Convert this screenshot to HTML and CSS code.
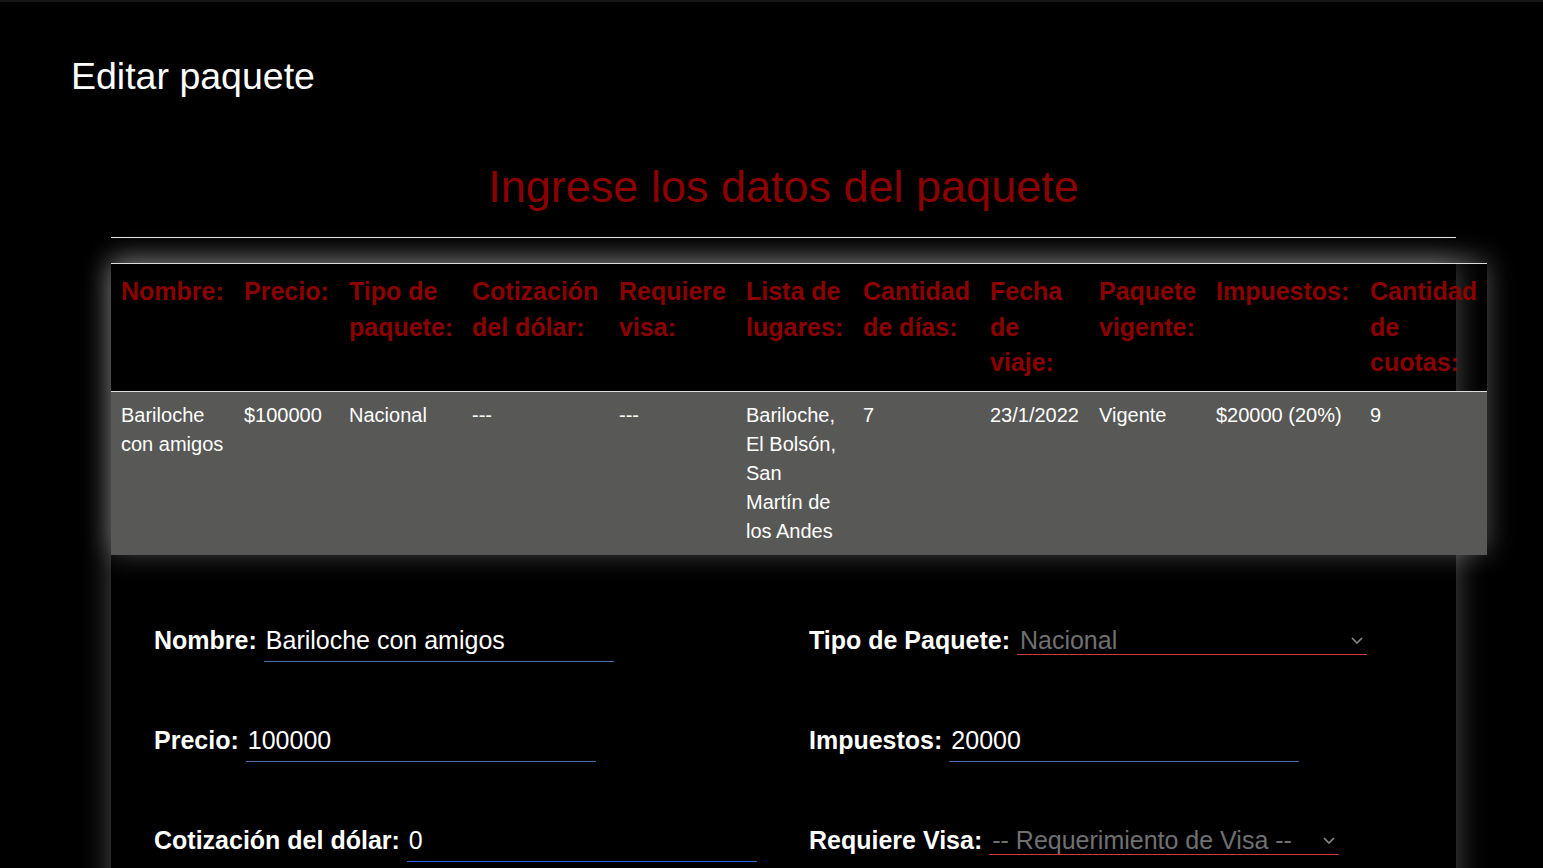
FILE: index.html
```html
<!DOCTYPE html>
<html lang="es">
<head>
<meta charset="utf-8">
<title>Editar paquete</title>
<link rel="stylesheet" href="styles.css">
</head>
<body>
<div class="topbar"></div>
<h1 class="page-title">Editar paquete</h1>
<section class="editor">
  <h2 class="editor-heading">Ingrese los datos del paquete</h2>
  <hr class="divider">
  <div class="panel">
    <table class="summary">
      <colgroup>
        <col class="col-nombre">
        <col class="col-precio">
        <col class="col-tipo">
        <col class="col-cotizacion">
        <col class="col-visa">
        <col class="col-lugares">
        <col class="col-dias">
        <col class="col-fecha">
        <col class="col-vigente">
        <col class="col-impuestos">
        <col class="col-cuotas">
      </colgroup>
      <thead>
        <tr>
          <th>Nombre:</th>
          <th>Precio:</th>
          <th>Tipo de paquete:</th>
          <th>Cotización del dólar:</th>
          <th>Requiere visa:</th>
          <th>Lista de lugares:</th>
          <th>Cantidad de días:</th>
          <th>Fecha de viaje:</th>
          <th>Paquete vigente:</th>
          <th>Impuestos:</th>
          <th>Cantidad de cuotas:</th>
        </tr>
      </thead>
      <tbody>
        <tr>
          <td>Bariloche con amigos</td>
          <td>$100000</td>
          <td>Nacional</td>
          <td>---</td>
          <td>---</td>
          <td>Bariloche, El Bolsón, San Martín de los Andes</td>
          <td>7</td>
          <td>23/1/2022</td>
          <td>Vigente</td>
          <td>$20000 (20%)</td>
          <td>9</td>
        </tr>
      </tbody>
    </table>

    <form class="form">
      <div class="field">
        <label class="field-label" for="nombre">Nombre:</label>
        <input class="text-input" id="nombre" type="text" value="Bariloche con amigos">
      </div>
      <div class="field">
        <label class="field-label" for="tipo">Tipo de Paquete:</label>
        <div class="select-wrap">
          <select class="select" id="tipo">
            <option>Nacional</option>
            <option>Internacional</option>
          </select>
          <svg class="chevron" width="12" height="7" viewBox="0 0 12 7" aria-hidden="true"><polyline points="1,1 6,6 11,1" fill="none" stroke="#8a8a8a" stroke-width="1.6"/></svg>
        </div>
      </div>
      <div class="field">
        <label class="field-label" for="precio">Precio:</label>
        <input class="text-input" id="precio" type="text" value="100000">
      </div>
      <div class="field">
        <label class="field-label" for="impuestos">Impuestos:</label>
        <input class="text-input" id="impuestos" type="text" value="20000">
      </div>
      <div class="field">
        <label class="field-label" for="cotizacion">Cotización del dólar:</label>
        <input class="text-input text-input-active" id="cotizacion" type="text" value="0">
      </div>
      <div class="field">
        <label class="field-label" for="visa">Requiere Visa:</label>
        <div class="select-wrap">
          <select class="select" id="visa">
            <option>-- Requerimiento de Visa --</option>
            <option>Sí</option>
            <option>No</option>
          </select>
          <svg class="chevron" width="12" height="7" viewBox="0 0 12 7" aria-hidden="true"><polyline points="1,1 6,6 11,1" fill="none" stroke="#8a8a8a" stroke-width="1.6"/></svg>
        </div>
      </div>
    </form>
  </div>
</section>
</body>
</html>
```

FILE: styles.css
```css
html, body {
  margin: 0;
  padding: 0;
  background: #000;
}

body {
  font-family: "Liberation Sans", Arial, sans-serif;
  color: #fff;
  overflow: hidden;
}

.topbar {
  height: 2px;
  background: #151515;
}

.page-title {
  margin: 53px 0 0 71px;
  font-size: 37.5px;
  font-weight: normal;
  line-height: normal;
  color: #fff;
}

.editor {
  margin-left: 111px;
  width: 1345px;
}

.editor-heading {
  margin: 63px 0 0;
  font-size: 45px;
  font-weight: normal;
  line-height: normal;
  text-align: center;
  color: #8b0000;
}

.divider {
  margin: 24px 0 0;
  height: 1px;
  border: 0;
  background: #e6e6e6;
}

.panel {
  margin-top: 25px;
  background: #000;
  box-shadow: 0 0 28px rgba(255, 255, 255, 0.3);
  padding-bottom: 120px;
}

.summary {
  width: 1376px;
  table-layout: fixed;
  border-collapse: collapse;
  border-top: 1px solid #dcdcdc;
  box-shadow: 0 -3px 26px rgba(255, 255, 255, 0.32);
}

.col-nombre { width: 123px; }
.col-precio { width: 105px; }
.col-tipo { width: 123px; }
.col-cotizacion { width: 147px; }
.col-visa { width: 127px; }
.col-lugares { width: 117px; }
.col-dias { width: 127px; }
.col-fecha { width: 109px; }
.col-vigente { width: 117px; }
.col-impuestos { width: 154px; }
.col-cuotas { width: 127px; }

.summary th {
  padding: 10px 8px 10px 10px;
  font-size: 25px;
  line-height: 35.5px;
  font-weight: bold;
  color: #8b0000;
  text-align: left;
  vertical-align: top;
  border-bottom: 1px solid #dcdcdc;
}

.summary td {
  padding: 9px 13px 9px 10px;
  font-size: 20px;
  line-height: 29px;
  color: #fff;
  vertical-align: top;
  background: #585856;
}

.summary td:first-child {
  padding-right: 4px;
}

.form {
  display: grid;
  grid-template-columns: 655px 1fr;
  grid-template-rows: repeat(3, 100px);
  align-items: baseline;
  padding: 69px 0 0 43px;
}

.field {
  display: flex;
  align-items: baseline;
  gap: 7px;
}

.field-label {
  font-size: 25px;
  font-weight: bold;
  color: #fff;
  white-space: nowrap;
}

.text-input {
  width: 350px;
  box-sizing: border-box;
  padding: 2px 2px 6px;
  border: 0;
  border-bottom: 1px solid #4a6db0;
  background: transparent;
  color: #fff;
  font-family: "Liberation Sans", Arial, sans-serif;
  font-size: 25px;
  outline: none;
}

.text-input-active {
  border-bottom-color: #2c64d6;
}

.select-wrap {
  position: relative;
  display: inline-block;
}

.select {
  appearance: none;
  -webkit-appearance: none;
  width: 350px;
  box-sizing: border-box;
  padding: 0 24px 0 3px;
  margin: 0;
  border: 0;
  border-bottom: 1px solid #d13a3a;
  border-radius: 0;
  background: transparent;
  color: #707070;
  font-family: "Liberation Sans", Arial, sans-serif;
  font-size: 25px;
  outline: none;
}

.chevron {
  position: absolute;
  right: 4px;
  bottom: 11px;
}
```
